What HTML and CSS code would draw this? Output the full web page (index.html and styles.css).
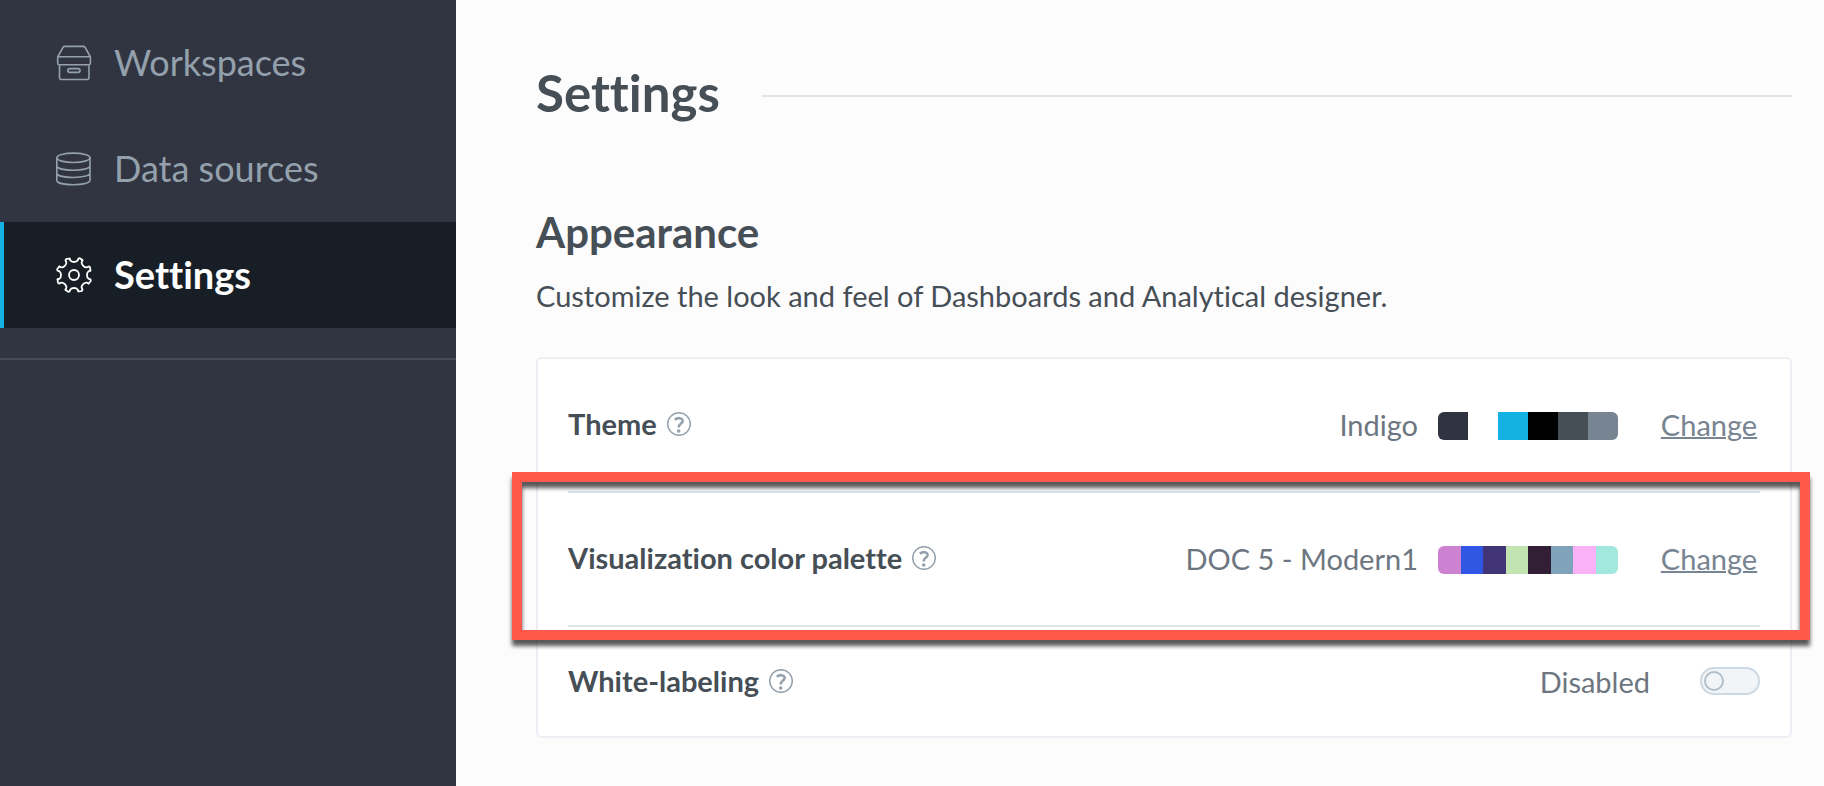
FILE: index.html
```html
<!DOCTYPE html>
<html lang="en">
<head>
<meta charset="utf-8">
<title>Settings</title>
<link rel="stylesheet" href="styles.css">
</head>
<body>
<svg class="defs" aria-hidden="true">
  <symbol id="help" viewBox="-12 -12 24 24">
    <circle r="11.3" fill="none" stroke="currentColor" stroke-width="1.5"/>
    <path d="M-4.2-4.3C-2.6-5.6-.8-6 .8-5.8 3.4-5.5 4.4-3.2 3.2-1.6 2-.2-.3.2-.3 3.4" fill="none" stroke="currentColor" stroke-width="2.6"/>
    <circle cx="-.3" cy="7" r="1.8" fill="currentColor"/>
  </symbol>
  <defs>
    <path id="notch" d="M-4.4-16.4-3.6-14.4Q-2.7-13 0-13T3.6-14.4L4.4-16.4Q5.2-17.1 6.3-16.5L8.5-14.7"/>
  </defs>
</svg>
<div class="app">
  <nav class="sidebar" aria-label="Main">
    <a class="nav-item" href="#workspaces">
      <svg class="nav-icon" viewBox="0 0 36 36" aria-hidden="true">
        <path d="M1.7 12 7 2.4Q7.6 1.4 8.7 1.4H27.4Q28.5 1.4 29.1 2.4L34.4 12M1.7 11.7H34.4V18Q34.4 19.7 32.8 19.7H3.3Q1.7 19.7 1.7 18ZM3.5 19.7V32.5Q3.5 34.5 5.5 34.5H31Q33 34.5 33 32.5V19.7"/>
        <rect x="11.8" y="23.6" width="12.2" height="3.8" rx="1.9"/>
      </svg>
      <span>Workspaces</span>
    </a>
    <a class="nav-item" href="#data-sources">
      <svg class="nav-icon" viewBox="0 0 36 36" aria-hidden="true">
        <ellipse cx="17.4" cy="6.8" rx="16.6" ry="4.7"/>
        <path d="M.8 6.8V29.3C.8 35.2 34 35.2 34 29.3V6.8M.8 14.8C.8 20.7 34 20.7 34 14.8M.8 22C.8 27.9 34 27.9 34 22"/>
      </svg>
      <span>Data sources</span>
    </a>
    <a class="nav-item nav-item-active" href="#settings" aria-current="page">
      <svg class="nav-icon nav-icon-gear" viewBox="-18 -18 36 36" aria-hidden="true">
        <circle r="5"/>
        <use href="#notch"/>
        <use href="#notch" transform="rotate(45)"/>
        <use href="#notch" transform="rotate(90)"/>
        <use href="#notch" transform="rotate(135)"/>
        <use href="#notch" transform="rotate(180)"/>
        <use href="#notch" transform="rotate(225)"/>
        <use href="#notch" transform="rotate(270)"/>
        <use href="#notch" transform="rotate(315)"/>
      </svg>
      <span>Settings</span>
    </a>
    <hr class="nav-divider">
  </nav>
  <main class="content">
    <header class="page-header">
      <h1 class="page-title">Settings</h1>
      <span class="page-rule"></span>
    </header>
    <section>
      <h2 class="section-title">Appearance</h2>
      <p class="section-text">Customize the look and feel of Dashboards and Analytical designer.</p>
      <div class="card">
        <div class="row">
          <h3 class="row-title">Theme</h3>
          <svg class="help" role="img" aria-label="Help"><use href="#help"/></svg>
          <span class="value">Indigo</span>
          <span class="palette">
            <i class="c-indigo"></i><i class="c-white"></i><i class="c-blue"></i><i class="c-black"></i><i class="c-slate"></i><i class="c-gray"></i>
          </span>
          <button class="change" type="button">Change</button>
        </div>
        <div class="row">
          <h3 class="row-title">Visualization color palette</h3>
          <svg class="help" role="img" aria-label="Help"><use href="#help"/></svg>
          <span class="value">DOC 5 - Modern1</span>
          <span class="palette">
            <i class="c-orchid"></i><i class="c-royal"></i><i class="c-violet"></i><i class="c-lime"></i><i class="c-plum"></i><i class="c-steel"></i><i class="c-pink"></i><i class="c-mint"></i>
          </span>
          <button class="change" type="button">Change</button>
          <span class="highlight"></span>
        </div>
        <div class="row row-last">
          <h3 class="row-title">White-labeling</h3>
          <svg class="help" role="img" aria-label="Help"><use href="#help"/></svg>
          <label class="value" for="white-labeling">Disabled</label>
          <input class="toggle" id="white-labeling" type="checkbox">
        </div>
      </div>
    </section>
  </main>
</div>
</body>
</html>
```
FILE: styles.css
```css
*,
*::before {
  box-sizing: border-box;
}

body {
  margin: 0;
  background: #fcfcfd;
  color: #464e56;
  font-family: Lato, "Open Sans", sans-serif;
  font-size: 29px;
  line-height: 36px;
  font-variant-ligatures: none;
}

h1, h2, h3, p {
  margin: 0;
}

.defs {
  position: absolute;
  width: 0;
  height: 0;
}

.app {
  display: flex;
  min-height: 100vh;
}

.sidebar {
  flex: 0 0 456px;
  padding-top: 10px;
  background: #313541;
}

.nav-item {
  display: flex;
  align-items: center;
  gap: 22px;
  height: 106px;
  padding-left: 52px;
  border-left: 4px solid transparent;
  color: #94a1ad;
  font-size: 36px;
  line-height: 48px;
  text-decoration: none;
}

.nav-item span {
  padding-bottom: 2px;
}

.nav-item-active {
  border-left-color: #14b2e2;
  background: #171e26;
  color: #fff;
  font-size: 38px;
  font-weight: 700;
}

.nav-icon {
  width: 36px;
  height: 36px;
  fill: none;
  stroke: currentColor;
  stroke-width: 1.6;
  stroke-linecap: round;
  stroke-linejoin: round;
}

.nav-icon-gear {
  stroke-width: 1.8;
}

.nav-divider {
  margin: 30px 0 0;
  border: 0;
  border-top: 2px solid #464b56;
}

.content {
  flex: 1;
  padding: 64px 32px 48px 80px;
}

.page-header {
  display: flex;
  align-items: center;
  gap: 42px;
  margin-bottom: 80px;
}

.page-title {
  padding-bottom: 6px;
  font-size: 51px;
  line-height: 58px;
}

.page-rule {
  flex: 1;
  height: 2px;
  background: #dde4eb;
}

.section-title {
  margin-bottom: 22px;
  font-size: 42px;
  line-height: 48px;
}

.card {
  margin-top: 43px;
  padding: 0 30px;
  border: 2px solid #ebeff4;
  border-radius: 6px;
  background: #fff;
}

.row {
  position: relative;
  display: flex;
  align-items: center;
  height: 134px;
  border-bottom: 2px solid #dde4eb;
}

.row-last {
  height: 109px;
  border-bottom: 0;
}

.row-title {
  padding-bottom: 2px;
  font-size: 29px;
  line-height: 36px;
}

.help {
  width: 24px;
  height: 24px;
  margin: 0 0 2px 10px;
  color: #94a1ad;
}

.value {
  margin-left: auto;
  color: #6d7680;
}

.palette {
  display: grid;
  grid-auto-flow: column;
  grid-auto-columns: 1fr;
  width: 180px;
  height: 28px;
  margin: 2px 0 0 20px;
  overflow: hidden;
  border-radius: 6px;
}

.c-indigo { background: #303442; }
.c-white { background: #fff; }
.c-blue { background: #14b2e2; }
.c-black { background: #000; }
.c-slate { background: #464e56; }
.c-gray { background: #778491; }
.c-orchid { background: #cd82d1; }
.c-royal { background: #3056e4; }
.c-violet { background: #423577; }
.c-lime { background: #c1e4b1; }
.c-plum { background: #321f35; }
.c-steel { background: #7ea3bb; }
.c-pink { background: #fab1f5; }
.c-mint { background: #a3e8df; }

.change {
  min-width: 102px;
  margin-left: 40px;
  padding: 0 2px;
  border: 0;
  background: none;
  color: #778491;
  font: inherit;
  text-decoration: underline;
  text-decoration-thickness: 2px;
}

.toggle {
  appearance: none;
  display: flex;
  align-items: center;
  width: 60px;
  height: 28px;
  margin: 0 0 2px 50px;
  padding: 0 2px;
  border: 2px solid #ccd8e2;
  border-radius: 14px;
  background: #f2f5f7;
}

.toggle::before {
  content: "";
  width: 20px;
  height: 20px;
  border: 2px solid #b0beca;
  border-radius: 50%;
}

.highlight {
  position: absolute;
  inset: -21px -50px -15px -56px;
  border: 10px solid #ff594c;
  filter: drop-shadow(0 6px 2px rgba(0, 0, 0, 0.65));
  pointer-events: none;
}
```
